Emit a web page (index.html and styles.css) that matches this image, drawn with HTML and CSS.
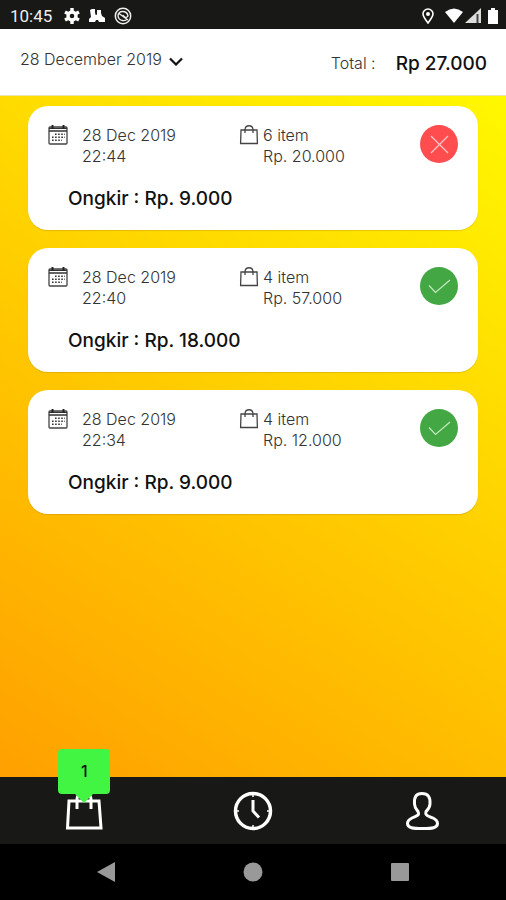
FILE: index.html
```html
<!DOCTYPE html>
<html lang="id">
<head>
<meta charset="utf-8">
<meta name="viewport" content="width=device-width, initial-scale=1">
<title>Riwayat Pesanan</title>
<link rel="stylesheet" href="styles.css">
</head>
<body>
<svg class="sprite" aria-hidden="true">
  <symbol id="calendar" viewBox="0 0 20 20">
    <rect x="1" y="2" width="18" height="17" rx="1" fill="none" stroke="#444" stroke-width="1.3"/>
    <path d="M1 3.4H19M1 6H19" stroke="#333" stroke-width="1.3"/>
    <path d="M4.5 0V4M15.5 0V4" stroke="#222" stroke-width="2"/>
    <path d="M7 9.2H17M4 12.2H17M4 15.2H14" stroke="#333" stroke-width="1.6" stroke-dasharray="1.6 1.5"/>
  </symbol>
  <symbol id="bag" viewBox="0 0 20 20">
    <path d="M2 5H18L18.4 18.500H1.6Z" fill="none" stroke="#444" stroke-width="1.3"/>
    <path d="M6 8V4.500C6.500 -.5 13.500 -.5 14 4.500V8" fill="none" stroke="#444" stroke-width="1.3"/>
  </symbol>
  <symbol id="check" viewBox="0 0 38 38">
    <path d="M9 18.5L15.5 25.5L30 13" fill="none" stroke="#c5e8c2" stroke-width="1.2"/>
  </symbol>
  <symbol id="cross" viewBox="0 0 38 38">
    <path d="M11 11L28 28M28 11L11 28" fill="none" stroke="#ffc5c5" stroke-width="1.2"/>
  </symbol>
</svg>
<div class="screen">
  <header class="status">
    <div class="status-group">
      <span class="clock">10:45</span>
      <svg width="16" height="16" viewBox="0 0 16 16"><circle cx="8" cy="8" r="4" fill="none" stroke="#fff" stroke-width="3.4"/><path d="M8 0V3M8 13V16M1 4L4 5.6M12 10.4L15 12M1 12L4 10.4M12 5.6L15 4" stroke="#fff" stroke-width="3.4"/></svg>
      <svg width="18" height="16" viewBox="0 0 18 16"><path d="M2 2L4 1H7V5L9 7V2H13V5L14 8L17 10V14H11L10 12H8L7 14H1V11L3 9Z" fill="#fff"/><path d="M8 1V7" stroke="#181816"/></svg>
      <svg width="18" height="18" viewBox="0 0 18 18"><circle cx="9" cy="9" r="7.7" fill="none" stroke="#eee" stroke-width="1.5"/><path d="M4 9C4 3 13 3 14 9C13 11 10 11 9 8M4 9C5 15 12 14 13 12M5 6.500L14 13" fill="none" stroke="#eee" stroke-width="1.4"/></svg>
    </div>
    <div class="status-group status-right">
      <svg width="12" height="16" viewBox="0 0 12 16"><path d="M6 15C3 11 1 8.5 1 6A5 5 0 0 1 11 6C11 8.500 9 11 6 15Z" fill="none" stroke="#fff" stroke-width="1.6"/><circle cx="6" cy="6" r="2" fill="#fff"/></svg>
      <svg class="wifi" width="18" height="16" viewBox="0 0 18 16"><path d="M0 4Q9 -3 18 4L9 15Z" fill="#fff"/></svg>
      <svg width="16" height="16" viewBox="0 0 16 16"><path d="M0 15L16 0V15Z" fill="#ddd"/><path d="M12.500 6V15" stroke="#444" stroke-width="2"/></svg>
      <svg class="battery" width="10" height="16" viewBox="0 0 10 16"><path d="M3 0H7V2H10V16H0V2H3Z" fill="#fff"/></svg>
    </div>
  </header>
  <section class="summary">
    <div class="date">
      <select aria-label="Tanggal"><option>28 December 2019</option></select>
      <svg class="chevron" width="14" height="9" viewBox="0 0 14 9"><path d="M1 1.500L7 7.500L13 1.500" fill="none" stroke="#111" stroke-width="2.2"/></svg>
    </div>
    <p class="total"><span>Total :</span><strong>Rp 27.000</strong></p>
  </section>
  <main class="orders">
    <article class="card">
      <div class="row">
        <svg class="icon"><use href="#calendar"/></svg>
        <p class="when">28 Dec 2019<br>22:44</p>
        <svg class="icon"><use href="#bag"/></svg>
        <p class="what">6 item<br>Rp. 20.000</p>
        <svg class="mark failed" role="img" aria-label="Batal"><use href="#cross"/></svg>
      </div>
      <p class="fee">Ongkir : Rp. 9.000</p>
    </article>
    <article class="card">
      <div class="row">
        <svg class="icon"><use href="#calendar"/></svg>
        <p class="when">28 Dec 2019<br>22:40</p>
        <svg class="icon"><use href="#bag"/></svg>
        <p class="what">4 item<br>Rp. 57.000</p>
        <svg class="mark done" role="img" aria-label="Selesai"><use href="#check"/></svg>
      </div>
      <p class="fee">Ongkir : Rp. 18.000</p>
    </article>
    <article class="card">
      <div class="row">
        <svg class="icon"><use href="#calendar"/></svg>
        <p class="when">28 Dec 2019<br>22:34</p>
        <svg class="icon"><use href="#bag"/></svg>
        <p class="what">4 item<br>Rp. 12.000</p>
        <svg class="mark done" role="img" aria-label="Selesai"><use href="#check"/></svg>
      </div>
      <p class="fee">Ongkir : Rp. 9.000</p>
    </article>
  </main>
  <nav class="tabs">
    <a class="tab" href="#orders" aria-label="Pesanan">
      <svg width="40" height="40" viewBox="0 0 40 40"><path d="M5 10H35L37 37H3.500Z" fill="none" stroke="#fff" stroke-width="3"/><path d="M13 18V8Q13 3 20 3Q27 3 27 8V18" fill="none" stroke="#fff" stroke-width="3"/></svg>
      <span class="badge">1</span>
    </a>
    <a class="tab" href="#history" aria-label="Riwayat">
      <svg width="40" height="40" viewBox="0 0 40 40"><circle cx="20" cy="20" r="17.500" fill="none" stroke="#fff" stroke-width="3.500"/><path d="M20 9V20L26 26.500" fill="none" stroke="#fff" stroke-width="3"/><path d="M20 3V6M20 34V37M3 20H6M34 20H37" stroke="#fff" stroke-width="1.500"/></svg>
    </a>
    <a class="tab" href="#profile" aria-label="Profil">
      <svg width="40" height="40" viewBox="0 0 40 40"><path d="M20 2.500C14 2.500 12 6 12.500 13C12.700 17 14.500 18.500 16 20.500C18 25 14 25 10 27C7 28.500 5.500 30 5.500 32.500C5.500 37 11 37.500 20.500 37.500C30 37.500 35.500 37 35.500 32.500C35.500 30 34 28.500 31 27C27 25 22.500 25 24 20.500C26 18.500 27.800 17 28 13C28.500 6 26 2.500 20 2.500Z" fill="none" stroke="#fff" stroke-width="3"/></svg>
    </a>
  </nav>
  <div class="system">
    <button aria-label="Kembali"><svg width="20" height="20" viewBox="0 0 20 20"><path d="M19 0V20L1 10Z"/></svg></button>
    <button aria-label="Beranda"><svg width="20" height="20" viewBox="0 0 20 20"><circle cx="10" cy="10" r="9.500"/></svg></button>
    <button aria-label="Terbaru"><svg width="20" height="20" viewBox="0 0 20 20"><rect x="1" y="1" width="18" height="18" rx="1"/></svg></button>
  </div>
</div>
</body>
</html>
```
FILE: styles.css
```css
* {
  box-sizing: border-box;
}

body {
  margin: 0;
  color: #333;
  font: 300 16px/21px Inter, "Liberation Sans", sans-serif;
}

p {
  margin: 0;
}

.sprite {
  position: absolute;
  width: 0;
  height: 0;
}

.screen {
  display: flex;
  flex-direction: column;
  min-height: 100vh;
  background: #000;
}

.status {
  display: flex;
  justify-content: space-between;
  padding: 2px 8px 0 10px;
  height: 29px;
  background: #181816;
  color: #eee;
}

.status-group {
  display: flex;
  align-items: center;
  gap: 8px;
}

.status-right {
  gap: 2px;
}

.wifi {
  margin-left: 9px;
}

.battery {
  margin-left: 5px;
}

.clock {
  margin-right: 4px;
  font: 400 17px/20px Roboto, sans-serif;
}

.summary {
  display: flex;
  justify-content: space-between;
  padding: 20px 19px 0 20px;
  height: 67px;
  background: #fff;
  border-bottom: 1px solid #eee6b0;
}

.date {
  display: flex;
  align-items: flex-start;
  gap: 7px;
}

.date select {
  appearance: none;
  padding: 0;
  border: 0;
  background: none;
  color: #333;
  font: inherit;
}

.chevron {
  margin-top: 8px;
}

.total {
  display: flex;
  gap: 20px;
  padding-top: 4px;
}

.total strong {
  color: #111;
  font-size: 19px;
  font-weight: 500;
}

.orders {
  flex: 1;
  display: flex;
  flex-direction: column;
  gap: 18px;
  padding: 10px 28px;
  background: linear-gradient(33deg, #ffa000, #fff800);
}

.card {
  padding: 19px 20px 20px;
  border-radius: 20px;
  background: #fff;
  box-shadow: 0 1px 1px rgba(120, 90, 0, 0.2);
}

.row {
  display: grid;
  grid-template-columns: 20px 17fr 20px 16fr 38px;
  align-items: start;
}

.icon {
  width: 20px;
  height: 20px;
}

.when {
  padding-left: 14px;
}

.what {
  padding-left: 4px;
}

.mark {
  width: 38px;
  height: 38px;
  border-radius: 50%;
}

.failed {
  background: #ff4d4f;
}

.done {
  background: #43a843;
}

.fee {
  margin-top: 21px;
  padding-left: 20px;
  color: #111;
  font-size: 19px;
  font-weight: 500;
  line-height: 22px;
}

.tabs {
  display: grid;
  grid-template-columns: repeat(3, 1fr);
  height: 67px;
  background: #181816;
}

.tab {
  position: relative;
  display: flex;
  justify-content: center;
  align-items: center;
}

.badge {
  position: absolute;
  top: -28px;
  width: 52px;
  padding: 12px 0;
  border-radius: 4px;
  background: #43f543;
  color: #111;
  font-weight: 500;
  text-align: center;
}

.badge::after {
  content: "";
  position: absolute;
  top: 100%;
  left: 50%;
  margin-left: -9px;
  border: 9px solid transparent;
  border-top-color: #43f543;
  border-bottom: 0;
}

.system {
  display: flex;
  justify-content: space-between;
  align-items: center;
  padding: 0 96px;
  height: 56px;
}

.system button {
  padding: 0;
  border: 0;
  background: none;
  line-height: 0;
  fill: #999;
}
```
